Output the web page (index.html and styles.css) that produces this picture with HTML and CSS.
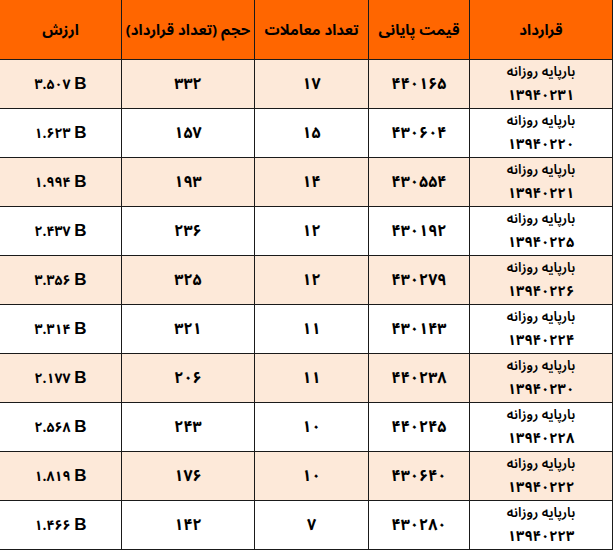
FILE: index.html
```html
<!DOCTYPE html>
<html lang="fa" dir="rtl">
<head>
<meta charset="utf-8">
<title>قراردادها</title>
<link rel="stylesheet" href="styles.css">
</head>
<body>
<table class="grid">
  <colgroup>
    <col class="c-contract">
    <col class="c-price">
    <col class="c-count">
    <col class="c-volume">
    <col class="c-value">
  </colgroup>
  <thead>
    <tr>
      <th>قرارداد</th>
      <th>قیمت پایانی</th>
      <th>تعداد معاملات</th>
      <th>حجم (تعداد قرارداد)</th>
      <th>ارزش</th>
    </tr>
  </thead>
  <tbody>
    <tr class="alt"><td class="name"><div class="name-box"><div class="nm">بارپایه روزانه</div><div class="code">۱۳۹۴۰۲۳۱</div></div></td><td>۴۴۰۱۶۵</td><td>۱۷</td><td>۳۳۲</td><td class="val"><span dir="ltr">۳.۵۰۷ <b>B</b></span></td></tr>
    <tr><td class="name"><div class="name-box"><div class="nm">بارپایه روزانه</div><div class="code">۱۳۹۴۰۲۲۰</div></div></td><td>۴۳۰۶۰۴</td><td>۱۵</td><td>۱۵۷</td><td class="val"><span dir="ltr">۱.۶۲۳ <b>B</b></span></td></tr>
    <tr class="alt"><td class="name"><div class="name-box"><div class="nm">بارپایه روزانه</div><div class="code">۱۳۹۴۰۲۲۱</div></div></td><td>۴۳۰۵۵۴</td><td>۱۴</td><td>۱۹۳</td><td class="val"><span dir="ltr">۱.۹۹۴ <b>B</b></span></td></tr>
    <tr><td class="name"><div class="name-box"><div class="nm">بارپایه روزانه</div><div class="code">۱۳۹۴۰۲۲۵</div></div></td><td>۴۳۰۱۹۲</td><td>۱۲</td><td>۲۳۶</td><td class="val"><span dir="ltr">۲.۴۳۷ <b>B</b></span></td></tr>
    <tr class="alt"><td class="name"><div class="name-box"><div class="nm">بارپایه روزانه</div><div class="code">۱۳۹۴۰۲۲۶</div></div></td><td>۴۳۰۲۷۹</td><td>۱۲</td><td>۳۲۵</td><td class="val"><span dir="ltr">۳.۳۵۶ <b>B</b></span></td></tr>
    <tr><td class="name"><div class="name-box"><div class="nm">بارپایه روزانه</div><div class="code">۱۳۹۴۰۲۲۴</div></div></td><td>۴۳۰۱۴۳</td><td>۱۱</td><td>۳۲۱</td><td class="val"><span dir="ltr">۳.۳۱۴ <b>B</b></span></td></tr>
    <tr class="alt"><td class="name"><div class="name-box"><div class="nm">بارپایه روزانه</div><div class="code">۱۳۹۴۰۲۳۰</div></div></td><td>۴۴۰۲۳۸</td><td>۱۱</td><td>۲۰۶</td><td class="val"><span dir="ltr">۲.۱۷۷ <b>B</b></span></td></tr>
    <tr><td class="name"><div class="name-box"><div class="nm">بارپایه روزانه</div><div class="code">۱۳۹۴۰۲۲۸</div></div></td><td>۴۴۰۲۴۵</td><td>۱۰</td><td>۲۴۳</td><td class="val"><span dir="ltr">۲.۵۶۸ <b>B</b></span></td></tr>
    <tr class="alt"><td class="name"><div class="name-box"><div class="nm">بارپایه روزانه</div><div class="code">۱۳۹۴۰۲۲۲</div></div></td><td>۴۳۰۶۴۰</td><td>۱۰</td><td>۱۷۶</td><td class="val"><span dir="ltr">۱.۸۱۹ <b>B</b></span></td></tr>
    <tr><td class="name"><div class="name-box"><div class="nm">بارپایه روزانه</div><div class="code">۱۳۹۴۰۲۲۳</div></div></td><td>۴۳۰۲۸۰</td><td>۷</td><td>۱۴۲</td><td class="val"><span dir="ltr">۱.۴۶۶ <b>B</b></span></td></tr>
  </tbody>
</table>
</body>
</html>
```
FILE: styles.css
```css
html, body {
  margin: 0;
  padding: 0;
  background: #ffffff;
}
body {
  font-family: "Noto Sans Arabic", "DejaVu Sans", "Noto Sans", sans-serif;
  color: #000;
}
.grid {
  border-collapse: collapse;
  table-layout: fixed;
  width: 613px;
  direction: rtl;
}
.c-contract { width: 143px; }
.c-price { width: 101px; }
.c-count { width: 114px; }
.c-volume { width: 133px; }
.c-value { width: 122px; }
.grid th {
  background: #ff6600;
  height: 59px;
  padding: 0;
  font-size: 15px;
  font-weight: bold;
  text-align: center;
  vertical-align: middle;
  border: 1px solid #1a1a1a;
  border-top: none;
}
.grid td {
  height: 48px;
  padding: 0;
  border: 1px solid #1a1a1a;
  font-size: 16px;
  font-weight: bold;
  text-align: center;
  vertical-align: middle;
}
.grid tr.alt td {
  background: #fde9d9;
}
.grid td.name {
  vertical-align: top;
}
.name-box {
  height: 48px;
  display: flex;
  flex-direction: column;
  align-items: center;
  justify-content: space-between;
  padding: 1px 0 0;
  box-sizing: border-box;
}
.nm {
  font-size: 13.5px;
  font-weight: 600;
  line-height: 22px;
}
.code {
  font-size: 14.5px;
  font-weight: bold;
  line-height: 24px;
}
.grid td.val {
  font-size: 14px;
  letter-spacing: -0.8px;
}
.grid td.val b {
  font-family: "Liberation Sans", Arial, sans-serif;
  font-size: 17px;
  letter-spacing: 0;
}
```
